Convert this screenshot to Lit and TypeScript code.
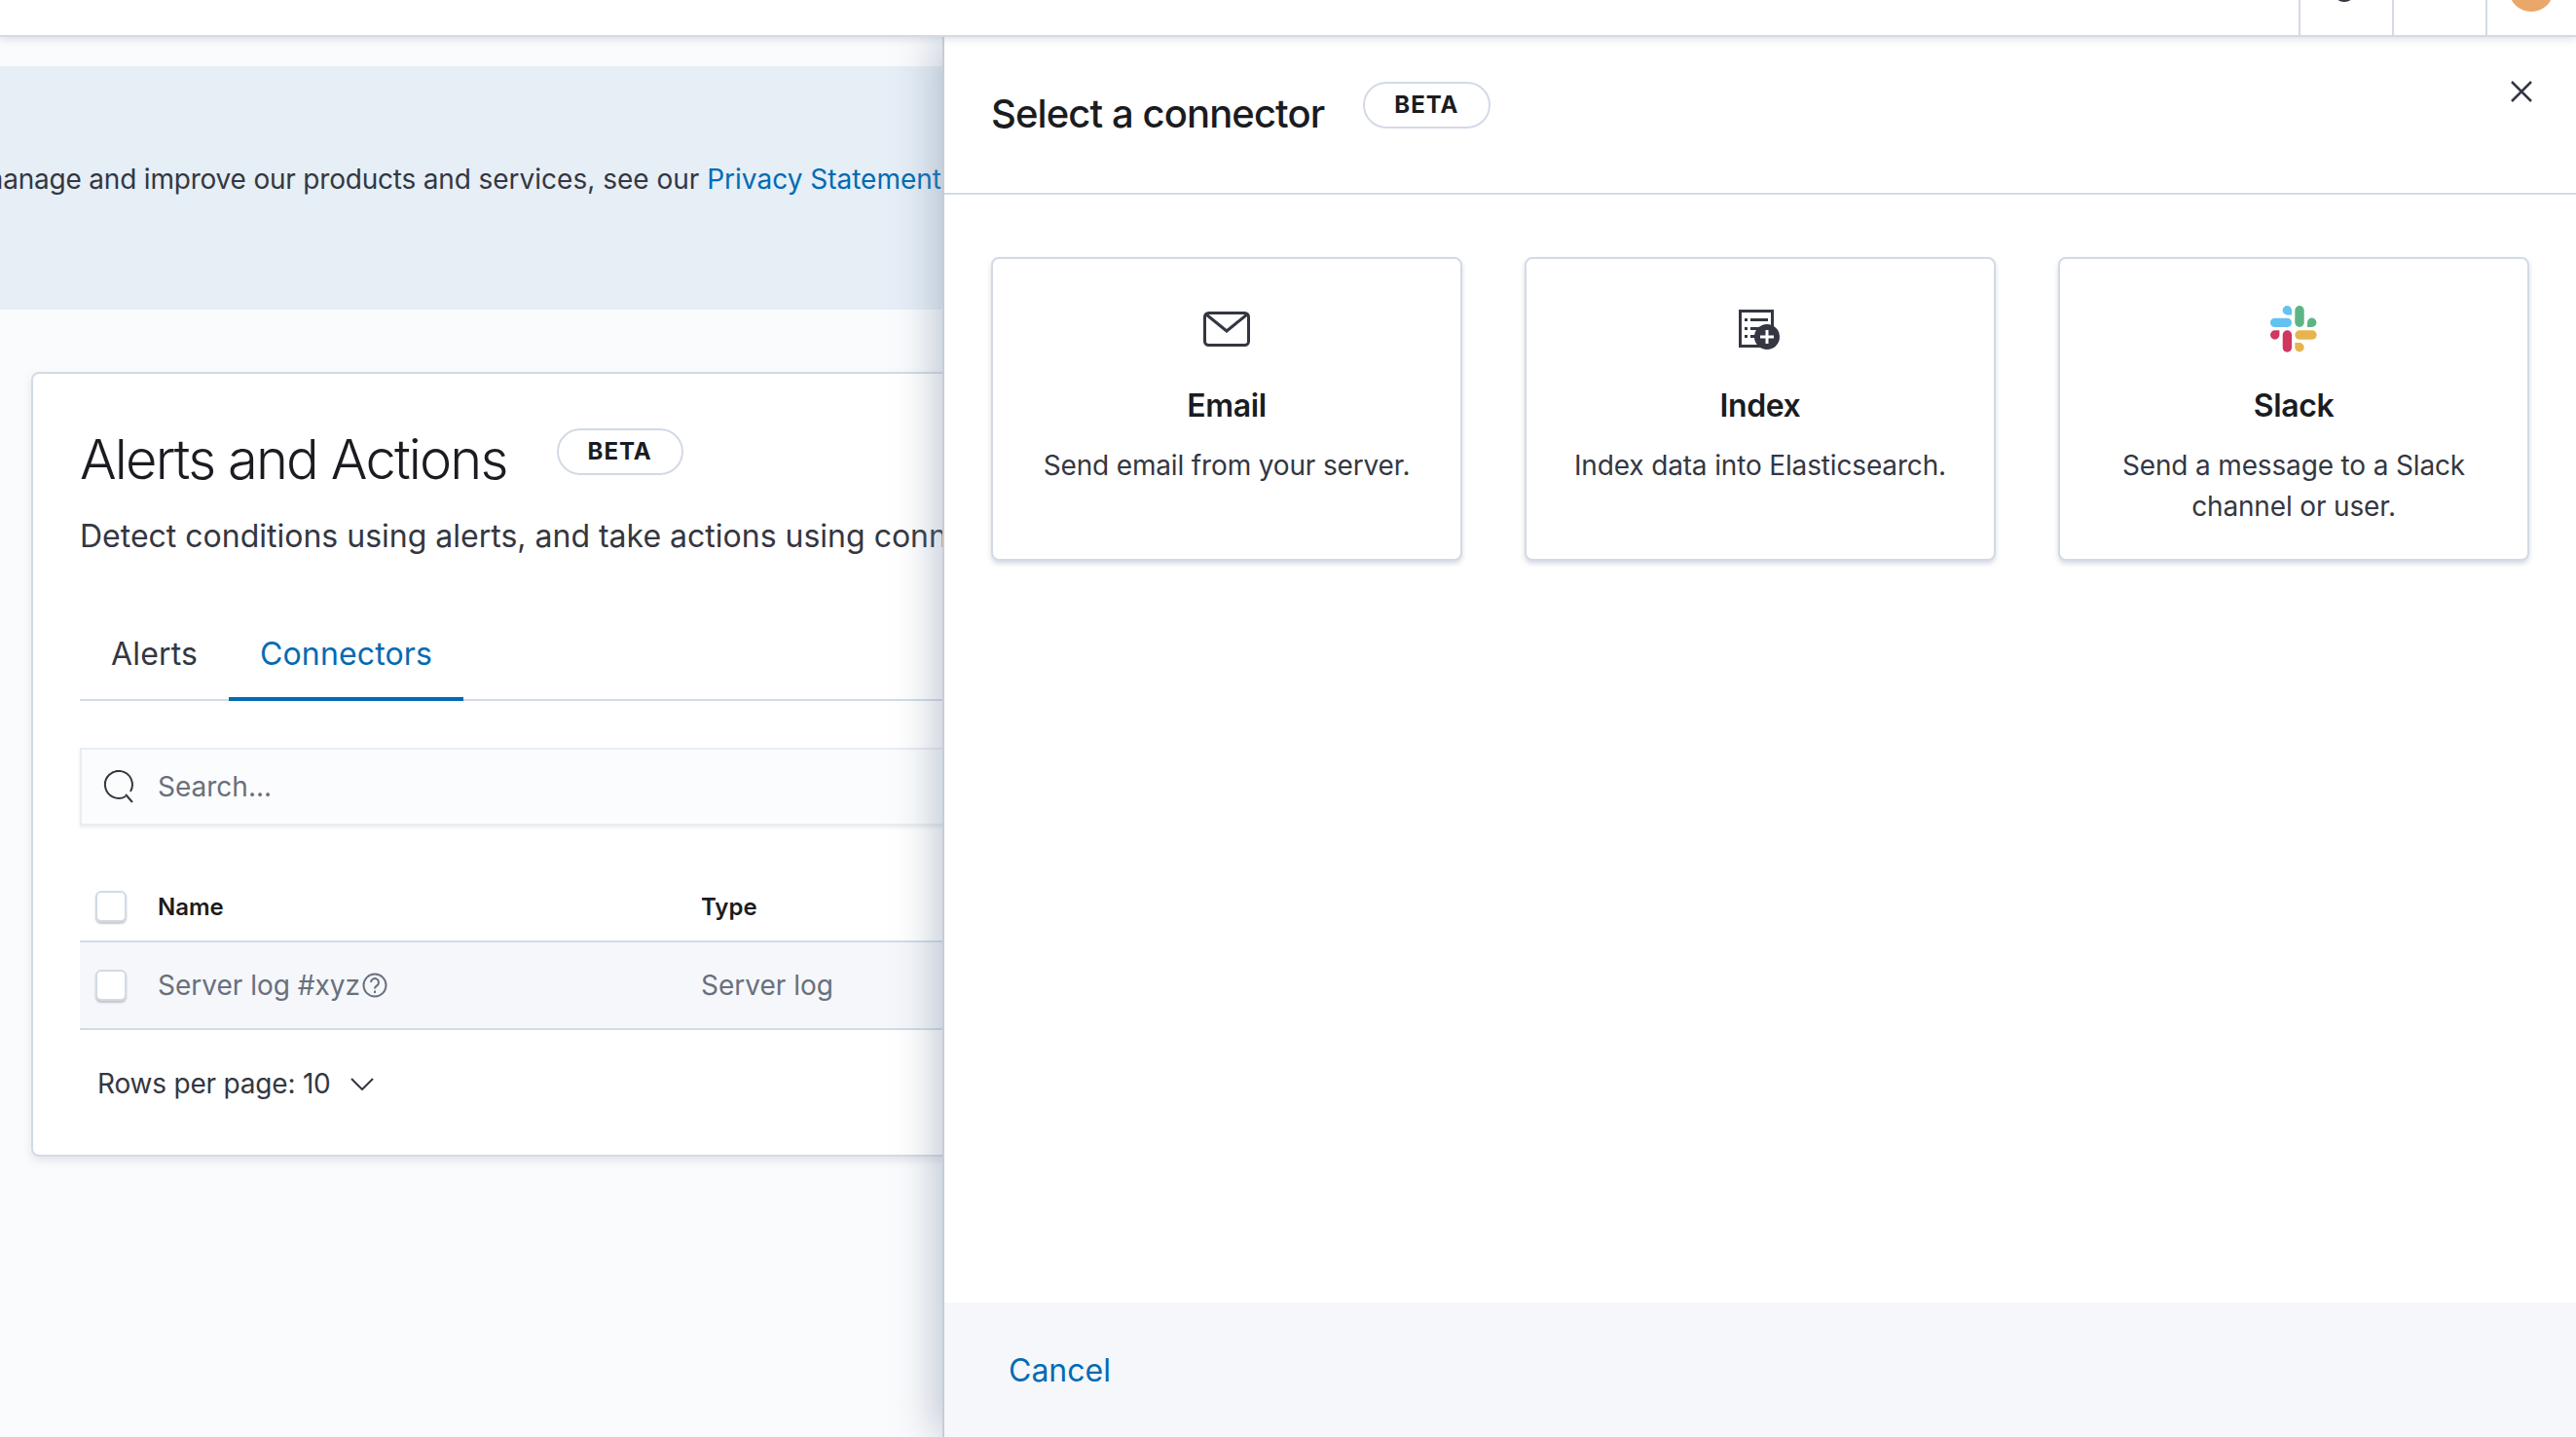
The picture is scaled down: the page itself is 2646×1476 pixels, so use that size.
import { LitElement, html, css } from 'lit';
import { customElement } from 'lit/decorators.js';

const connectors = [
  {
    title: 'Email',
    desc: 'Send email from your server.',
    icon: html`<svg width="48" height="36" viewBox="0 0 48 36" fill="none" stroke="#343741" stroke-width="3">
      <rect x="1.5" y="1.5" width="45" height="33" rx="4" />
      <path d="M3 3l21 17L45 3" />
    </svg>`,
  },
  {
    title: 'Index',
    desc: 'Index data into Elasticsearch.',
    icon: html`<svg width="44" height="41" viewBox="2 0 44 41" fill="none">
      <path d="M3.5 1.5h33v36h-33z" stroke="#343741" stroke-width="3" />
      <path d="M8 9h3v3H8zM8 18h3v3H8zM8 26h3v3H8z" fill="#343741" />
      <path d="M14 10.5h18M14 19.5h9M14 27.5h6" stroke="#343741" stroke-width="3" />
      <circle cx="31" cy="28" r="13" fill="#343741" />
      <path d="M31 21v14M24 28h14" stroke="#fff" stroke-width="3" />
    </svg>`,
  },
  {
    title: 'Slack',
    desc: 'Send a message to a Slack channel or user.',
    icon: html`<svg width="48" height="48" viewBox="0 0 48 48">
      <path d="M22 9.4h-4.7A4.7 4.7 0 1 1 22 4.7z" fill="#62c3ee" />
      <rect x="0" y="12.7" width="22" height="9.4" rx="4.7" fill="#62c3ee" />
      <rect x="25.3" y="0" width="9.4" height="22" rx="4.7" fill="#5db585" />
      <path d="M38 22v-4.7a4.7 4.7 0 1 1 4.7 4.7z" fill="#5db585" />
      <path d="M9.4 25.3v4.7a4.7 4.7 0 1 1-4.7-4.7z" fill="#cf3760" />
      <rect x="12.7" y="25.3" width="9.4" height="22.4" rx="4.7" fill="#cf3760" />
      <rect x="25.3" y="25.3" width="22.4" height="9.4" rx="4.7" fill="#e7b44f" />
      <path d="M25.3 38H30a4.7 4.7 0 1 1-4.7 4.7z" fill="#e7b44f" />
    </svg>`,
  },
];

@customElement('app-root')
export class AppRoot extends LitElement {
  static styles = css`
    :host {
      display: block;
      position: relative;
      width: 2646px;
      height: 1476px;
      overflow: hidden;
      background: #fafbfd;
      font-family: Inter, 'Liberation Sans', sans-serif;
      color: #343741;
    }

    a {
      color: #006bb4;
      text-decoration: none;
    }

    .topbar {
      display: flex;
      justify-content: flex-end;
      height: 36px;
      background: #fff;
      border-bottom: 2px solid #d3dae6;
      box-shadow: 0 2px 8px rgba(152, 162, 179, 0.35);
      position: relative;
      z-index: 1;
    }

    .topcell {
      width: 94px;
      border-left: 2px solid #d3dae6;
      position: relative;
      overflow: hidden;
    }

    .topcell:last-child {
      width: 91px;
    }

    .help-ring {
      position: absolute;
      left: 33px;
      top: -22px;
      width: 20px;
      height: 20px;
      border: 2.5px solid #343741;
      border-radius: 50%;
    }

    .avatar {
      position: absolute;
      left: 22px;
      top: -34px;
      width: 46px;
      height: 46px;
      border-radius: 50%;
      background: #e9a76a;
    }

    .banner {
      display: flex;
      align-items: center;
      justify-content: flex-end;
      margin-top: 30px;
      width: 968px;
      height: 250px;
      padding: 0 1px 18px 0;
      box-sizing: border-box;
      overflow: hidden;
      white-space: nowrap;
      background: #e6eef6;
      font-size: 28px;
    }

    .tight {
      letter-spacing: -0.2px;
    }

    .panel {
      margin: 64px 0 0 32px;
      width: 1400px;
      height: 806px;
      box-sizing: border-box;
      padding: 49px 0 0 48px;
      background: #fff;
      border: 2px solid #d3dae6;
      border-radius: 8px;
      box-shadow: 0 4px 8px rgba(152, 162, 179, 0.25);
    }

    .title-row {
      display: flex;
      align-items: center;
      gap: 51px;
      height: 80px;
    }

    h1 {
      margin: -2px 0 0;
      font-size: 56px;
      font-weight: 300;
      letter-spacing: -1.85px;
      color: #1a1c21;
      white-space: nowrap;
    }

    .badge {
      box-sizing: border-box;
      padding: 0 30px;
      height: 48px;
      line-height: 44px;
      border: 2px solid #d3dae6;
      border-radius: 24px;
      background: #fff;
      font-size: 24px;
      font-weight: 700;
      letter-spacing: 1px;
      color: #1a1c21;
    }

    .title-row .badge {
      margin-bottom: 18px;
    }

    .subtitle {
      margin-top: 18px;
      font-size: 32px;
      white-space: nowrap;
      color: #343741;
    }

    .tabs {
      display: flex;
      margin-top: 52px;
      height: 96px;
      border-bottom: 2px solid #d3dae6;
    }

    .tab {
      display: flex;
      align-items: center;
      box-sizing: border-box;
      height: 98px;
      padding: 0 32px;
      font-size: 32px;
      letter-spacing: 0.15px;
      color: #343741;
    }

    .tab.active {
      padding-top: 4px;
      color: #006bb4;
      border-bottom: 4px solid #006bb4;
    }

    .search {
      display: flex;
      align-items: center;
      gap: 24px;
      margin-top: 48px;
      height: 80px;
      box-sizing: border-box;
      padding-left: 21px;
      background: #fbfcfd;
      border: 2px solid #e9edf3;
      box-shadow: 0 2px 3px rgba(152, 162, 179, 0.2);
      font-size: 28px;
      color: #69707d;
    }

    .search span {
      margin-left: -1px;
    }

    .row {
      display: flex;
      align-items: center;
      font-size: 28px;
    }

    .row.head {
      margin-top: 38px;
      height: 82px;
      box-sizing: border-box;
      padding-top: 10px;
      font-weight: 600;
      font-size: 24px;
      color: #1a1c21;
      border-bottom: 2px solid #d3dae6;
    }

    .row.body {
      height: 88px;
      background: #f5f7fa;
      color: #69707d;
      border-bottom: 2px solid #d3dae6;
    }

    .check {
      width: 80px;
      flex: none;
    }

    .box {
      display: block;
      width: 32px;
      height: 32px;
      margin-left: 16px;
      box-sizing: border-box;
      background: #fff;
      border: 2px solid #d3dae6;
      border-radius: 6px;
      box-shadow: 0 2px 2px rgba(100, 100, 100, 0.35);
    }

    .name {
      display: flex;
      align-items: center;
      gap: 2px;
      width: 558px;
      flex: none;
    }

    .pager {
      display: flex;
      align-items: center;
      gap: 20px;
      margin: 38px 0 0 18px;
      font-size: 28px;
      letter-spacing: -0.2px;
      color: #343741;
    }

    .flyout {
      position: absolute;
      left: 968px;
      top: 38px;
      right: 0;
      bottom: 0;
      display: flex;
      flex-direction: column;
      box-sizing: border-box;
      background: #fff;
      border-left: 2px solid #c6ccd8;
      box-shadow: -8px 0 40px rgba(120, 135, 160, 0.45);
    }

    .flyout-head {
      display: flex;
      align-items: flex-start;
      gap: 40px;
      height: 162px;
      flex: none;
      box-sizing: border-box;
      padding: 54px 0 0 48px;
      border-bottom: 2px solid #d3dae6;
    }

    h2 {
      margin: 0;
      font-size: 40px;
      font-weight: 500;
      color: #1a1c21;
      white-space: nowrap;
      letter-spacing: -0.9px;
    }

    .flyout-head .badge {
      margin-top: -8px;
    }

    .close {
      position: absolute;
      right: 45px;
      top: 45px;
      display: block;
    }

    .flyout-body {
      flex: 1;
      display: grid;
      grid-template-columns: repeat(3, 1fr);
      gap: 64px;
      align-content: start;
      padding: 64px 48px 0 48px;
    }

    .card {
      display: flex;
      flex-direction: column;
      align-items: center;
      height: 312px;
      box-sizing: border-box;
      padding: 0 32px;
      background: #fff;
      border: 2px solid #d3dae6;
      border-radius: 8px;
      box-shadow: 0 3px 5px rgba(152, 162, 179, 0.4);
      text-align: center;
    }

    .card-icon {
      display: flex;
      align-items: center;
      justify-content: center;
      height: 48px;
      margin-top: 48px;
    }

    .card-title {
      margin-top: 35px;
      font-size: 32px;
      font-weight: 600;
      letter-spacing: -0.4px;
      line-height: 40px;
      color: #1a1c21;
    }

    .card-desc {
      margin-top: 20px;
      font-size: 28px;
      letter-spacing: -0.15px;
      line-height: 42px;
      color: #343741;
    }

    .card:last-child .card-desc {
      padding: 0 16px;
    }

    .flyout-foot {
      display: flex;
      align-items: center;
      height: 138px;
      flex: none;
      padding-left: 66px;
      background: #f5f7fa;
      font-size: 32px;
    }
  `;

  render() {
    return html`
      <div class="topbar">
        <div class="topcell"><span class="help-ring"></span></div>
        <div class="topcell"></div>
        <div class="topcell"><span class="avatar"></span></div>
      </div>

      <div class="banner">
        <span>To learn about how usage data helps us <span class="tight">manage and improve our products and</span> services, see our <a href="#">Privacy Statement</a></span>
      </div>

      <div class="panel">
        <div class="title-row">
          <h1>Alerts and Actions</h1>
          <span class="badge">BETA</span>
        </div>
        <div class="subtitle">Detect conditions using alerts, and take actions using connectors.</div>
        <div class="tabs">
          <div class="tab">Alerts</div>
          <div class="tab active">Connectors</div>
        </div>
        <div class="search">
          <svg width="34" height="34" viewBox="0 0 34 34" fill="none" stroke="#343741" stroke-width="2">
            <path d="M24 27a14 14 0 1 1 5-5M24 25l7 8" />
          </svg>
          <span>Search...</span>
        </div>
        <div class="row head">
          <div class="check"><span class="box"></span></div>
          <div class="name">Name</div>
          <div>Type</div>
        </div>
        <div class="row body">
          <div class="check"><span class="box"></span></div>
          <div class="name">
            Server log #xyz
            <svg width="26" height="26" viewBox="0 0 26 26" fill="none" stroke="#69707d" stroke-width="2">
              <circle cx="13" cy="13" r="11.5" />
              <path d="M9 10a4 4 0 1 1 6 3.5c-1.5.8-2 1.5-2 3" />
              <path d="M13 18.5v2.5" />
            </svg>
          </div>
          <div>Server log</div>
        </div>
        <div class="pager">
          <span>Rows per page: 10</span>
          <svg width="24" height="13" viewBox="0 0 24 13" fill="none" stroke="#343741" stroke-width="2">
            <path d="M1 1l11 11L23 1" />
          </svg>
        </div>
      </div>

      <div class="flyout">
        <div class="flyout-head">
          <h2>Select a connector</h2>
          <span class="badge">BETA</span>
          <svg class="close" width="22" height="22" viewBox="0 0 22 22" fill="none" stroke="#343741" stroke-width="2.5">
            <path d="M1 1l20 20M21 1L1 21" />
          </svg>
        </div>
        <div class="flyout-body">
          ${connectors.map(
            (c) => html`
              <div class="card">
                <div class="card-icon">${c.icon}</div>
                <div class="card-title">${c.title}</div>
                <div class="card-desc">${c.desc}</div>
              </div>
            `
          )}
        </div>
        <div class="flyout-foot"><a href="#">Cancel</a></div>
      </div>
    `;
  }
}
